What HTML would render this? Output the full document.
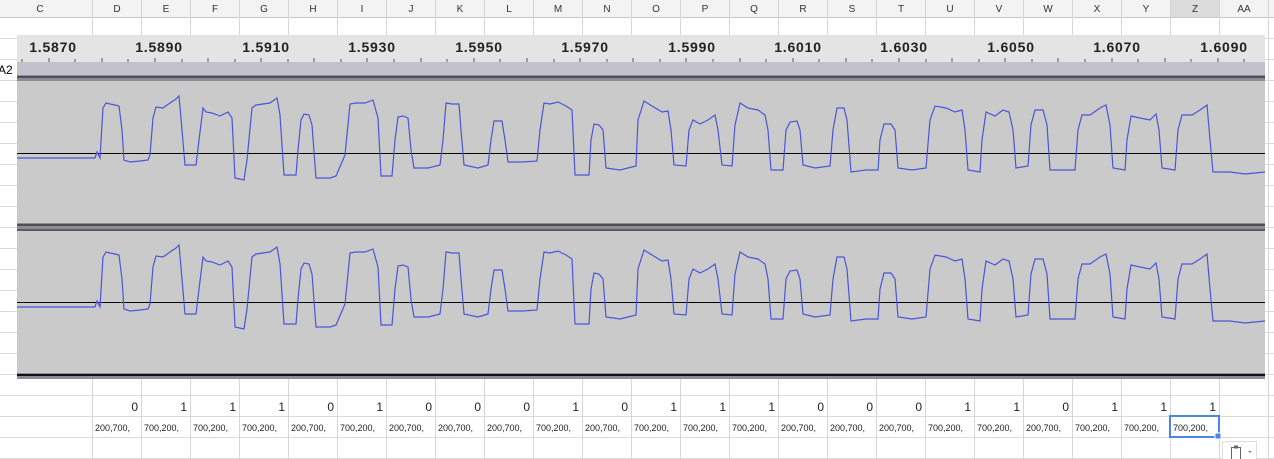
<!DOCTYPE html>
<html><head><meta charset="utf-8"><style>
body{margin:0;width:1274px;height:459px;overflow:hidden;background:#fff;font-family:"Liberation Sans",Arial,sans-serif;position:relative}
.a{position:absolute}
</style></head><body>
<svg class="a" style="left:0;top:0" width="1274" height="459" xmlns="http://www.w3.org/2000/svg">
<rect x="0" y="0" width="1274" height="17" fill="#f3f3f3"/>
<rect x="1170" y="0" width="49" height="17" fill="#dcdcdc"/>
<line x1="0" y1="17.5" x2="1274" y2="17.5" stroke="#c8c8c8"/>
<g stroke="#dadada">
<line x1="0" y1="38.5" x2="1274" y2="38.5"/><line x1="0" y1="59.5" x2="1274" y2="59.5"/><line x1="0" y1="80.5" x2="1274" y2="80.5"/><line x1="0" y1="101.5" x2="1274" y2="101.5"/><line x1="0" y1="122.5" x2="1274" y2="122.5"/><line x1="0" y1="143.5" x2="1274" y2="143.5"/><line x1="0" y1="164.5" x2="1274" y2="164.5"/><line x1="0" y1="185.5" x2="1274" y2="185.5"/><line x1="0" y1="206.5" x2="1274" y2="206.5"/><line x1="0" y1="227.5" x2="1274" y2="227.5"/><line x1="0" y1="248.5" x2="1274" y2="248.5"/><line x1="0" y1="269.5" x2="1274" y2="269.5"/><line x1="0" y1="290.5" x2="1274" y2="290.5"/><line x1="0" y1="311.5" x2="1274" y2="311.5"/><line x1="0" y1="332.5" x2="1274" y2="332.5"/><line x1="0" y1="353.5" x2="1274" y2="353.5"/><line x1="0" y1="374.5" x2="1274" y2="374.5"/><line x1="0" y1="395.5" x2="1274" y2="395.5"/><line x1="0" y1="416.5" x2="1274" y2="416.5"/><line x1="0" y1="437.5" x2="1274" y2="437.5"/><line x1="0" y1="458.5" x2="1274" y2="458.5"/>
</g>
<g stroke="#d6d6d6">
<line x1="92.5" y1="0" x2="92.5" y2="459"/><line x1="141.5" y1="0" x2="141.5" y2="459"/><line x1="190.5" y1="0" x2="190.5" y2="459"/><line x1="239.5" y1="0" x2="239.5" y2="459"/><line x1="288.5" y1="0" x2="288.5" y2="459"/><line x1="337.5" y1="0" x2="337.5" y2="459"/><line x1="386.5" y1="0" x2="386.5" y2="459"/><line x1="435.5" y1="0" x2="435.5" y2="459"/><line x1="484.5" y1="0" x2="484.5" y2="459"/><line x1="533.5" y1="0" x2="533.5" y2="459"/><line x1="582.5" y1="0" x2="582.5" y2="459"/><line x1="631.5" y1="0" x2="631.5" y2="459"/><line x1="680.5" y1="0" x2="680.5" y2="459"/><line x1="729.5" y1="0" x2="729.5" y2="459"/><line x1="778.5" y1="0" x2="778.5" y2="459"/><line x1="827.5" y1="0" x2="827.5" y2="459"/><line x1="876.5" y1="0" x2="876.5" y2="459"/><line x1="925.5" y1="0" x2="925.5" y2="459"/><line x1="974.5" y1="0" x2="974.5" y2="459"/><line x1="1023.5" y1="0" x2="1023.5" y2="459"/><line x1="1072.5" y1="0" x2="1072.5" y2="459"/><line x1="1121.5" y1="0" x2="1121.5" y2="459"/><line x1="1170.5" y1="0" x2="1170.5" y2="459"/><line x1="1219.5" y1="0" x2="1219.5" y2="459"/><line x1="1268.5" y1="0" x2="1268.5" y2="459"/>
</g>
<g font-size="10" fill="#333" text-anchor="middle" font-family="Liberation Sans, sans-serif">
<text x="40" y="12">C</text><text x="117" y="12">D</text><text x="166" y="12">E</text><text x="215" y="12">F</text><text x="264" y="12">G</text><text x="313" y="12">H</text><text x="362" y="12">I</text><text x="411" y="12">J</text><text x="460" y="12">K</text><text x="509" y="12">L</text><text x="558" y="12">M</text><text x="607" y="12">N</text><text x="656" y="12">O</text><text x="705" y="12">P</text><text x="754" y="12">Q</text><text x="803" y="12">R</text><text x="852" y="12">S</text><text x="901" y="12">T</text><text x="950" y="12">U</text><text x="999" y="12">V</text><text x="1048" y="12">W</text><text x="1097" y="12">X</text><text x="1146" y="12">Y</text><text x="1195" y="12">Z</text><text x="1244" y="12">AA</text>
</g>
<rect x="17" y="35" width="1248" height="27" fill="#e4e4e4"/>
<g font-size="14" font-weight="bold" fill="#222" text-anchor="middle" letter-spacing="0.8" font-family="Liberation Sans, sans-serif">
<text x="53" y="52">1.5870</text><text x="159" y="52">1.5890</text><text x="266" y="52">1.5910</text><text x="372" y="52">1.5930</text><text x="479" y="52">1.5950</text><text x="585" y="52">1.5970</text><text x="692" y="52">1.5990</text><text x="798" y="52">1.6010</text><text x="904" y="52">1.6030</text><text x="1011" y="52">1.6050</text><text x="1117" y="52">1.6070</text><text x="1224" y="52">1.6090</text>
</g>
<g stroke="#555">
<line x1="22" y1="59" x2="22" y2="62"/><line x1="49" y1="58" x2="49" y2="62"/><line x1="75" y1="59" x2="75" y2="62"/><line x1="102" y1="58" x2="102" y2="62"/><line x1="128" y1="59" x2="128" y2="62"/><line x1="155" y1="58" x2="155" y2="62"/><line x1="182" y1="59" x2="182" y2="62"/><line x1="208" y1="58" x2="208" y2="62"/><line x1="235" y1="59" x2="235" y2="62"/><line x1="261" y1="58" x2="261" y2="62"/><line x1="288" y1="59" x2="288" y2="62"/><line x1="314" y1="58" x2="314" y2="62"/><line x1="341" y1="59" x2="341" y2="62"/><line x1="367" y1="58" x2="367" y2="62"/><line x1="394" y1="59" x2="394" y2="62"/><line x1="421" y1="58" x2="421" y2="62"/><line x1="447" y1="59" x2="447" y2="62"/><line x1="474" y1="58" x2="474" y2="62"/><line x1="500" y1="59" x2="500" y2="62"/><line x1="527" y1="58" x2="527" y2="62"/><line x1="554" y1="59" x2="554" y2="62"/><line x1="580" y1="58" x2="580" y2="62"/><line x1="607" y1="59" x2="607" y2="62"/><line x1="633" y1="58" x2="633" y2="62"/><line x1="660" y1="59" x2="660" y2="62"/><line x1="686" y1="58" x2="686" y2="62"/><line x1="713" y1="59" x2="713" y2="62"/><line x1="740" y1="58" x2="740" y2="62"/><line x1="766" y1="59" x2="766" y2="62"/><line x1="793" y1="58" x2="793" y2="62"/><line x1="819" y1="59" x2="819" y2="62"/><line x1="846" y1="58" x2="846" y2="62"/><line x1="872" y1="59" x2="872" y2="62"/><line x1="899" y1="58" x2="899" y2="62"/><line x1="926" y1="59" x2="926" y2="62"/><line x1="952" y1="58" x2="952" y2="62"/><line x1="979" y1="59" x2="979" y2="62"/><line x1="1005" y1="58" x2="1005" y2="62"/><line x1="1032" y1="59" x2="1032" y2="62"/><line x1="1058" y1="58" x2="1058" y2="62"/><line x1="1085" y1="59" x2="1085" y2="62"/><line x1="1112" y1="58" x2="1112" y2="62"/><line x1="1138" y1="59" x2="1138" y2="62"/><line x1="1165" y1="58" x2="1165" y2="62"/><line x1="1191" y1="59" x2="1191" y2="62"/><line x1="1218" y1="58" x2="1218" y2="62"/><line x1="1244" y1="59" x2="1244" y2="62"/>
</g>
<rect x="17" y="62" width="1248" height="14" fill="#c3c1cc"/>
<rect x="17" y="75" width="1248" height="6" fill="#8e8d96"/>
<rect x="17" y="76" width="1248" height="2" fill="#4e4e56"/>
<rect x="17" y="81" width="1248" height="142" fill="#cacaca"/>
<rect x="17" y="223" width="1248" height="8" fill="#8e8d96"/>
<rect x="17" y="224" width="1248" height="2" fill="#4e4e56"/>
<rect x="17" y="229" width="1248" height="2" fill="#5c5c66"/>
<rect x="17" y="231" width="1248" height="142" fill="#cacaca"/>
<rect x="17" y="373" width="1248" height="6" fill="#8e8d96"/>
<rect x="17" y="374" width="1248" height="2" fill="#111"/>
<line x1="17" y1="153.5" x2="1265" y2="153.5" stroke="#000"/>
<line x1="17" y1="302.5" x2="1265" y2="302.5" stroke="#000"/>
<g id="w" fill="none" stroke="#4a56d8" stroke-width="1.2">
<path d="M17,158 L95,158 L97,152 L100,158 L103,108 L106,103 L110,104 L115,105 L119,106 L122,130 L124,160 L130,162 L140,161 L148,160 L150,155 L153,118 L156,107 L163,108 L170,103 L176,99 L179,96 L182,130 L185,165 L196,165 L199,140 L203,108 L206,112 L212,113 L220,116 L228,112 L232,118 L235,178 L244,180 L247,160 L252,108 L256,105 L263,104 L270,103 L277,98 L280,115 L284,175 L296,175 L298,150 L301,120 L304,114 L309,115 L312,125 L316,178 L330,178 L336,176 L345,155 L350,104 L356,103 L365,103 L373,100 L378,118 L381,176 L392,176 L395,140 L398,117 L403,116 L408,118 L411,150 L414,168 L428,168 L440,165 L443,140 L446,103 L452,104 L459,104 L461,130 L464,165 L478,168 L488,165 L491,140 L494,121 L502,121 L505,140 L508,162 L523,162 L537,161 L540,130 L544,103 L550,104 L558,102 L566,106 L572,110 L575,175 L589,175 L591,140 L594,124 L599,125 L603,130 L606,168 L620,170 L636,166 L638,120 L644,101 L652,106 L662,112 L668,111 L671,130 L674,165 L686,166 L689,130 L693,120 L700,124 L708,120 L715,115 L718,130 L722,165 L732,166 L735,125 L740,103 L748,108 L758,110 L765,115 L768,130 L771,170 L783,170 L786,130 L790,122 L797,121 L800,130 L803,165 L815,168 L830,166 L833,130 L837,108 L844,108 L847,120 L851,172 L866,170 L878,170 L880,140 L884,124 L891,124 L895,130 L898,168 L912,170 L926,168 L930,120 L935,106 L946,108 L955,112 L962,110 L965,130 L968,170 L980,172 L982,140 L986,112 L995,116 L1003,110 L1009,112 L1013,130 L1016,168 L1028,166 L1031,125 L1035,110 L1043,110 L1047,125 L1050,170 L1062,170 L1075,170 L1078,130 L1082,115 L1090,115 L1100,108 L1106,105 L1110,125 L1113,168 L1125,170 L1127,140 L1131,116 L1140,118 L1150,120 L1156,114 L1159,130 L1162,168 L1175,170 L1178,130 L1182,115 L1192,115 L1200,110 L1207,105 L1210,140 L1213,172 L1230,172 L1245,174 L1265,172"/>
</g>
<use href="#w" transform="translate(0,149)"/>
<rect x="0" y="62" width="17" height="14" fill="#fff"/>
<text x="-2" y="74" font-size="12" fill="#000" font-family="Liberation Sans, sans-serif">A2</text>
<g font-size="12" fill="#222" text-anchor="end" font-family="Liberation Sans, sans-serif">
<text x="138" y="411">0</text><text x="187" y="411">1</text><text x="236" y="411">1</text><text x="285" y="411">1</text><text x="334" y="411">0</text><text x="383" y="411">1</text><text x="432" y="411">0</text><text x="481" y="411">0</text><text x="530" y="411">0</text><text x="579" y="411">1</text><text x="628" y="411">0</text><text x="677" y="411">1</text><text x="726" y="411">1</text><text x="775" y="411">1</text><text x="824" y="411">0</text><text x="873" y="411">0</text><text x="922" y="411">0</text><text x="971" y="411">1</text><text x="1020" y="411">1</text><text x="1069" y="411">0</text><text x="1118" y="411">1</text><text x="1167" y="411">1</text><text x="1216" y="411">1</text>
</g>
<g font-size="9" fill="#222" font-family="Liberation Sans, sans-serif">
<text x="95" y="431">200,700,</text><text x="144" y="431">700,200,</text><text x="193" y="431">700,200,</text><text x="242" y="431">700,200,</text><text x="291" y="431">200,700,</text><text x="340" y="431">700,200,</text><text x="389" y="431">200,700,</text><text x="438" y="431">200,700,</text><text x="487" y="431">200,700,</text><text x="536" y="431">700,200,</text><text x="585" y="431">200,700,</text><text x="634" y="431">700,200,</text><text x="683" y="431">700,200,</text><text x="732" y="431">700,200,</text><text x="781" y="431">200,700,</text><text x="830" y="431">200,700,</text><text x="879" y="431">200,700,</text><text x="928" y="431">700,200,</text><text x="977" y="431">700,200,</text><text x="1026" y="431">200,700,</text><text x="1075" y="431">700,200,</text><text x="1124" y="431">700,200,</text><text x="1173" y="431">700,200,</text>
</g>
<rect x="1170" y="416" width="49" height="21" fill="none" stroke="#4a86e8" stroke-width="2"/>
<rect x="1215" y="433" width="6" height="6" fill="#4a86e8" stroke="#fff"/>
<rect x="1222.5" y="441.5" width="34" height="20" fill="#fff" stroke="#ddd"/>
<rect x="1231.5" y="447.5" width="9" height="12" fill="none" stroke="#666"/>
<rect x="1234" y="445.5" width="4" height="3" fill="#666"/>
<path d="M1248,451 L1252,451 L1250,453 Z" fill="#888"/>
</svg>
</body></html>
